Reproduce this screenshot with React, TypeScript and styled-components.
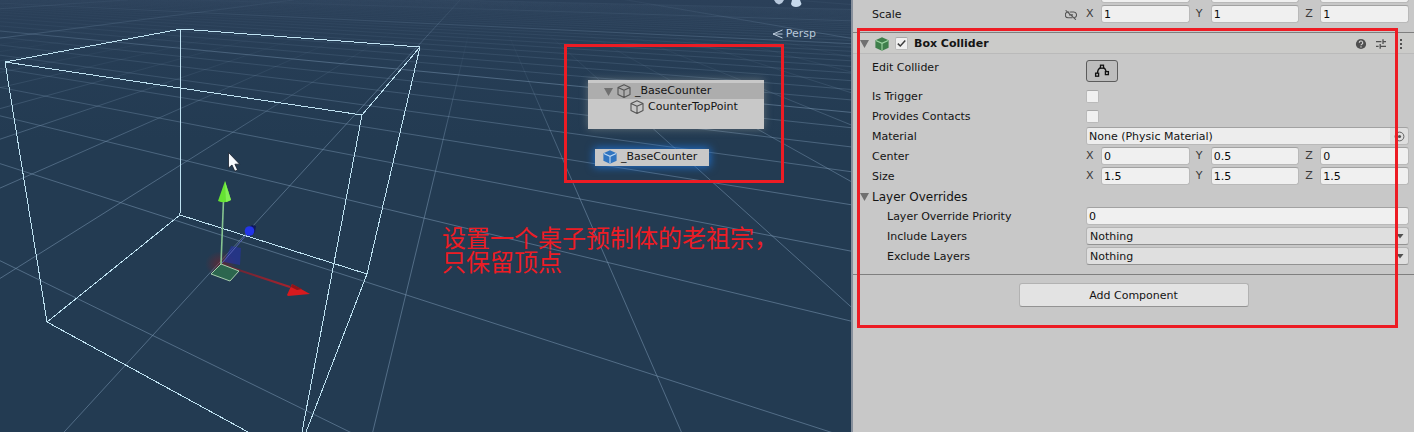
import React from "react";
import styled, { createGlobalStyle } from "styled-components";

const GlobalStyle = createGlobalStyle`
  *, *::before, *::after { box-sizing: border-box; }
  body {
    margin: 0;
    background: #c8c8c8;
    color: #141414;
    font-family: "DejaVu Sans", Verdana, sans-serif;
    font-size: 11px;
    line-height: 16px;
  }
  button, input, select { font: inherit; color: inherit; margin: 0; }
`;

/* ---------- shell ---------- */

const Editor = styled.main`
  position: relative;
  display: grid;
  grid-template-columns: minmax(0, 851fr) minmax(0, 563fr);
  min-height: 100vh;
  overflow: hidden;
`;

const Scene = styled.section`
  position: relative;
  overflow: hidden;
  background: linear-gradient(#2b4059 0, #263d55 60px, #233b52 140px);
`;

const SceneCanvas = styled.svg`
  position: absolute;
  inset: 0;
  width: 100%;
  height: 100%;
`;

const Inspector = styled.section`
  border-left: 2px solid #87909c;
  background: #c8c8c8;
  overflow: hidden;
`;

/* ---------- scene overlays ---------- */

const Projection = styled.button`
  position: absolute;
  top: 26px;
  right: 35px;
  display: flex;
  align-items: center;
  gap: 3px;
  padding: 0;
  border: 0;
  background: none;
  color: #b9c9da;
`;

const Callout = styled.div<{ $x: number; $y: number; $w: number; $h: number }>`
  position: absolute;
  left: ${(p) => p.$x}px;
  top: ${(p) => p.$y}px;
  width: ${(p) => p.$w}px;
  height: ${(p) => p.$h}px;
  border: 3px solid #ed1c24;
  pointer-events: none;
`;

const Note = styled.p`
  position: absolute;
  left: 442px;
  top: 225px;
  margin: 0;
  color: #ed1c24;
  font-family: "Noto Sans CJK SC", sans-serif;
  font-size: 24px;
  line-height: 24px;
  white-space: nowrap;
`;

const Hierarchy = styled.ul`
  position: absolute;
  left: 588px;
  top: 80px;
  width: 176px;
  height: 49px;
  margin: 0;
  padding: 3px 0 0;
  list-style: none;
  background: #c8c8c8;
  box-shadow: 0 0 8px rgba(210, 205, 190, 0.35);
`;

const TreeItem = styled.li<{ $depth: number; $selected?: boolean }>`
  display: flex;
  align-items: center;
  gap: 4px;
  height: 16px;
  padding-left: ${(p) => 16 + p.$depth * 26}px;
  background: ${(p) => (p.$selected ? "#adadad" : "transparent")};
  white-space: nowrap;
`;

const PrefabTag = styled.div`
  position: absolute;
  left: 595px;
  top: 149px;
  display: flex;
  align-items: center;
  gap: 4px;
  width: 114px;
  padding: 0 0 1px 8px;
  background: #c8c8c8;
  box-shadow: 0 0 8px 1px rgba(30, 120, 225, 0.85);
  white-space: nowrap;
`;

/* ---------- inspector parts ---------- */

const Properties = styled.div<{ $clipped?: boolean }>`
  display: flex;
  flex-direction: column;
  margin-top: ${(p) => (p.$clipped ? "-15px" : "0")};
  padding-bottom: 7px;
`;

const Row = styled.div<{ $tall?: boolean }>`
  display: grid;
  grid-template-columns: 214px minmax(0, 1fr);
  align-items: start;
  height: ${(p) => (p.$tall ? 33 : 20)}px;
  padding: ${(p) => (p.$tall ? 4 : 0)}px 5px 0 19px;
`;

const Label = styled.label<{ $nested?: boolean }>`
  display: flex;
  align-items: center;
  justify-content: space-between;
  height: 20px;
  padding: 0 9px 0 ${(p) => (p.$nested ? 15 : 0)}px;
  white-space: nowrap;
`;

const Axes = styled.div`
  display: grid;
  grid-template-columns: repeat(3, minmax(0, 1fr));
  gap: 6px;
`;

const Axis = styled.label`
  display: grid;
  grid-template-columns: 15px minmax(0, 1fr);
  align-items: center;
  color: #3a3a3a;

  > input { grid-column: 2; }
`;

const Field = styled.input`
  width: 100%;
  height: 18px;
  padding: 1px 2px 0;
  border: 1px solid #b9b9b9;
  border-top-color: #a2a2a2;
  border-radius: 3px;
  background: #f0f0f0;
  color: #0c0c0c;
`;

const ObjectField = styled.div`
  display: grid;
  grid-template-columns: minmax(0, 1fr) 18px;
  height: 18px;
  border: 1px solid #b9b9b9;
  border-top-color: #a2a2a2;
  border-radius: 3px;
  background: #dedede;
  overflow: hidden;
`;

const ObjectName = styled.input`
  min-width: 0;
  height: 16px;
  padding: 1px 2px 0;
  border: 0;
  background: #ededed;
`;

const IconButton = styled.button`
  display: grid;
  place-items: center;
  padding: 0;
  border: 0;
  background: none;
  color: #505050;
`;

const SelectBox = styled.div`
  display: grid;
  align-items: center;

  > * { grid-area: 1 / 1; }
  > svg { justify-self: end; margin-right: 5px; pointer-events: none; }
`;

const Select = styled.select`
  appearance: none;
  width: 100%;
  height: 18px;
  padding: 1px 3px 0;
  border: 1px solid #b4b4b4;
  border-bottom-color: #929292;
  border-radius: 3px;
  background: #dfdfdf;
`;

const CheckBox = styled.span`
  display: grid;
  place-items: center;
  width: 13px;
  height: 13px;

  > * { grid-area: 1 / 1; }
  > svg { pointer-events: none; visibility: hidden; }
  > input:checked + svg { visibility: visible; }
`;

const CheckInput = styled.input`
  appearance: none;
  width: 13px;
  height: 13px;
  border: 1px solid #bababa;
  border-top-color: #a8a8a8;
  border-radius: 2px;
  background: #f0f0f0;
`;

const CheckCell = styled.div`
  padding-top: 3px;
`;

const EditButton = styled.button`
  display: grid;
  place-items: center;
  width: 32px;
  height: 22px;
  margin-top: 2px;
  padding: 0;
  border: 1px solid #5c5c5c;
  border-radius: 3px;
  background: #bdbdbd;
`;

const Header = styled.header`
  display: flex;
  align-items: center;
  gap: 6px;
  height: 22px;
  padding: 1px 7px 0;
  border-top: 1px solid #7f7f7f;
  border-bottom: 1px solid #bababa;
  background: #cbcbc9;
`;

const Title = styled.h2`
  flex: 1;
  margin: 0;
  font-size: 11px;
  font-weight: 700;
  line-height: 16px;
`;

const Tools = styled.div`
  display: flex;
  gap: 8px;
`;

const FoldoutRow = styled.button`
  display: flex;
  align-items: center;
  gap: 3px;
  height: 20px;
  padding: 0 0 1px 7px;
  border: 0;
  background: none;
  font-size: 12px;
`;

const Footer = styled.footer`
  display: flex;
  justify-content: center;
  padding: 8px 0;
  border-top: 1px solid #7f7f7f;
`;

const AddButton = styled.button`
  width: 230px;
  height: 24px;
  padding: 1px 0 0;
  border: 1px solid #b2b2b2;
  border-bottom-color: #939393;
  border-radius: 3px;
  background: #e3e3e3;
`;

/* ---------- icons ---------- */

const Triangle = () => (
  <svg width="9" height="9" viewBox="0 0 9 9" aria-hidden="true">
    <path d="M0 1h9L4.5 9z" fill="#707070" />
  </svg>
);

const CubeOutline = () => (
  <svg width="14" height="14" viewBox="0 0 14 14" fill="none" stroke="#555" strokeWidth="1.1" strokeLinejoin="round" aria-hidden="true">
    <path d="M7 .8 13 3.5v7L7 13.4 1 10.5v-7zM1 3.5l6 2.7 6-2.7M7 6.2v7.2" />
  </svg>
);

const CubeSolid = ({ fill, edge }: { fill: string; edge: string }) => (
  <svg width="14" height="14" viewBox="0 0 14 14" aria-hidden="true">
    <path d="M7 .3 13.6 3.3v7.4L7 13.8.4 10.7V3.3z" fill={fill} />
    <path d="M.8 3.6 7 6.3l6.2-2.7M7 6.3v7.3" fill="none" stroke={edge} strokeWidth="1.1" />
  </svg>
);

const Unlinked = () => (
  <svg width="12" height="10" viewBox="0 0 12 10" fill="none" stroke="#555" strokeWidth="1.1" strokeLinecap="round" aria-hidden="true">
    <path d="M4 2H3.2a2.8 2.8 0 0 0 0 5.8H7M5.500 2H8.800a2.8 2.8 0 0 1 1 5.400M4.500 4.900h3M1 .6l9.500 8.800" />
  </svg>
);

const EditPoints = () => (
  <svg width="16" height="14" viewBox="0 0 16 14" fill="none" stroke="#111" strokeWidth="1.3" aria-hidden="true">
    <path d="M3.4 9C3.6 6.500 4.6 4.500 6.400 3.600M9.600 3.600c1.4.9 2.200 2.200 2.600 4" />
    <rect x="1.6" y="9.2" width="3" height="3" />
    <rect x="6.5" y="1.2" width="3" height="3" />
    <rect x="11.4" y="7.6" width="3" height="3" />
  </svg>
);

const Help = () => (
  <svg width="12" height="12" viewBox="0 0 12 12" aria-hidden="true">
    <circle cx="6" cy="6" r="5.1" fill="#505050" />
    <path d="M4.3 4.8a1.7 1.7 0 1 1 2.5 1.4c-.6.3-.8.5-.8 1.1M6 8.2v1.2" fill="none" stroke="#d0d0d0" strokeWidth="1.2" />
  </svg>
);

const Presets = () => (
  <svg width="12" height="12" viewBox="0 0 12 12" fill="none" stroke="#505050" strokeWidth="1.3" aria-hidden="true">
    <path d="M1 3.6h5.4M8 3.6h3M8 1.2v4.8M1 8.4h2.6M5.2 8.4H11M5.2 6v4.8" />
  </svg>
);

const Kebab = () => (
  <svg width="12" height="12" viewBox="0 0 12 12" fill="#505050" aria-hidden="true">
    <path d="M5 1h2v2H5zM5 5h2v2H5zM5 9h2v2H5z" />
  </svg>
);

const Picker = () => (
  <svg width="11" height="11" viewBox="0 0 11 11" aria-hidden="true">
    <circle cx="5.5" cy="5.5" r="4.4" fill="none" stroke="#606060" />
    <circle cx="5.5" cy="5.5" r="1.6" fill="#505050" />
  </svg>
);

const Check = () => (
  <svg width="13" height="13" viewBox="0 0 13 13" aria-hidden="true">
    <path d="M2.8 6.6 5.3 9 10.3 3.6" fill="none" stroke="#3c3c3c" strokeWidth="1.5" />
  </svg>
);

const Arrow = () => (
  <svg width="8" height="5" viewBox="0 0 8 5" aria-hidden="true">
    <path d="M.5 0h7L4 4.5z" fill="#505050" />
  </svg>
);

const PerspGlyph = () => (
  <svg width="11" height="10" viewBox="0 0 11 10" fill="none" stroke="#b9c9da" aria-hidden="true">
    <path d="M10.5 1 1 5l9.5 4M1 5h9.5" />
  </svg>
);

/* ---------- ground grid in perspective ---------- */

type Point = [number, number];

/* Unit square to screen quad; four cells along s, two along t. */
const quad: Point[] = [[32, 174], [657, 376], [580, 199], [159, 118]];
const [[x0, y0], [x1, y1], [x2, y2], [x3, y3]] = quad;
const sx = x0 - x1 + x2 - x3;
const sy = y0 - y1 + y2 - y3;
const det = (x1 - x2) * (y3 - y2) - (x3 - x2) * (y1 - y2);
const g = (sx * (y3 - y2) - (x3 - x2) * sy) / det;
const h = ((x1 - x2) * sy - sx * (y1 - y2)) / det;

const project = (s: number, t: number): Point => {
  const w = 1 + g * s + h * t;
  return [
    ((x1 - x0 + g * x1) * s + (x3 - x0 + h * x3) * t + x0) / w,
    ((y1 - y0 + g * y1) * s + (y3 - y0 + h * y3) * t + y0) / w,
  ];
};

const range = (from: number, to: number) => Array.from({ length: to - from + 1 }, (_, k) => from + k);

const toPath = (a: Point, b: Point) =>
  `M${a[0].toFixed(1)} ${a[1].toFixed(1)}L${b[0].toFixed(1)} ${b[1].toFixed(1)}`;

const depthLine = (i: number) => {
  const s = i / 4;
  return toPath(project(s, -(1 + g * s) / h + 0.15), project(s, 90));
};

const crossLine = (j: number) => {
  const t = (j - 1) / 2;
  return toPath(project(-90, t), project(-(1 + h * t) / g - 0.15, t));
};

const isMajorDepth = (i: number) => (i + 8) % 10 === 0;
const isMajorCross = (j: number) => (j + 2) % 10 === 0;
const depth = range(-28, 52);
const cross = range(-4, 38);
const minorDepth = depth.filter((i) => !isMajorDepth(i)).map(depthLine).join("");
const minorCross = cross.filter((j) => !isMajorCross(j)).map(crossLine).join("");
const majorGrid = [
  ...depth.filter(isMajorDepth).map(depthLine),
  ...cross.filter(isMajorCross).map(crossLine),
].join("");

const SceneDrawing = () => (
  <SceneCanvas viewBox="0 0 851 432" preserveAspectRatio="xMinYMin slice" aria-hidden="true">
    <defs>
      <linearGradient id="minorDepth" gradientUnits="userSpaceOnUse" x1="0" y1="30" x2="0" y2="200">
        <stop offset="0" stopColor="#7d9ab6" stopOpacity="0" />
        <stop offset="0.25" stopColor="#7d9ab6" stopOpacity="0.12" />
        <stop offset="0.6" stopColor="#7d9ab6" stopOpacity="0.4" />
        <stop offset="1" stopColor="#7d9ab6" stopOpacity="0.52" />
      </linearGradient>
      <linearGradient id="minorCross" gradientUnits="userSpaceOnUse" x1="0" y1="15" x2="0" y2="215">
        <stop offset="0" stopColor="#7d9ab6" stopOpacity="0.04" />
        <stop offset="0.25" stopColor="#7d9ab6" stopOpacity="0.2" />
        <stop offset="0.6" stopColor="#7d9ab6" stopOpacity="0.42" />
        <stop offset="1" stopColor="#7d9ab6" stopOpacity="0.52" />
      </linearGradient>
      <linearGradient id="major" gradientUnits="userSpaceOnUse" x1="0" y1="0" x2="0" y2="160">
        <stop offset="0" stopColor="#7d9ab6" stopOpacity="0.06" />
        <stop offset="0.4" stopColor="#7d9ab6" stopOpacity="0.46" />
        <stop offset="1" stopColor="#7d9ab6" stopOpacity="0.52" />
      </linearGradient>
      <radialGradient id="redGlow">
        <stop offset="0" stopColor="#a01818" stopOpacity="0.45" />
        <stop offset="1" stopColor="#a01818" stopOpacity="0" />
      </radialGradient>
      <linearGradient id="shaft" x1="0" x2="1">
        <stop offset="0" stopColor="#5c2738" />
        <stop offset="1" stopColor="#a8222c" />
      </linearGradient>
    </defs>
    <path d={minorDepth} stroke="url(#minorDepth)" fill="none" />
    <path d={minorCross} stroke="url(#minorCross)" fill="none" />
    <path d={majorGrid} stroke="url(#major)" fill="none" />

    <path
      d="M5 62 181 29 420 47 362 115ZM181 29 180 215M5 62 47 322M362 115 302 432M420 47 367 274 306 432M180 215 367 274M180 215 47 322 248 432"
      fill="none"
      stroke="#bfe2f2"
      shapeRendering="crispEdges"
    />

    <ellipse cx="221" cy="264" rx="16" ry="13" fill="url(#redGlow)" />
    <path d="M224 262 231 246 241 248 240 265z" fill="#2632a8" opacity="0.6" />
    <path d="M222 263 248 233" stroke="#5663b4" />
    <path d="M246 229 252 225 256 226 255 232 250 236z" fill="#101a5c" />
    <circle cx="249.5" cy="231" r="4.8" fill="#2335e8" />
    <path d="M222 264.5 290 287" stroke="url(#shaft)" strokeWidth="2" />
    <path d="M287 295 292 284 310 294 288 296z" fill="#d81a1e" />
    <path d="M292 284 302 289 297 290 291 287z" fill="#8e1519" />
    <path d="M221 264 239 271 230 281 211 274z" fill="#2c664e" stroke="#a9cfae" />
    <path d="M221 264 223.5 200" stroke="#86c490" strokeWidth="1.6" />
    <path d="M225 181 231 200Q225 204 218 201z" fill="#66e333" />
    <path d="M225 181 231 200 226 202z" fill="#83f055" />

    <path d="M228.5 152.500v15.500l3.500-3 2.800 6.200 2.800-1.200-2.700-5.800h4.800z" fill="#f7fbff" stroke="#18202c" strokeWidth="0.8" />

    <path d="M774 0h10l-2 3-3 1.5-3-1.5z" fill="#b7c8dc" />
    <path d="M792 0h8l1.5 4Q800 7 796 7T791 4z" fill="#c6d9ec" />
  </SceneCanvas>
);

/* ---------- rows ---------- */

const Vector = ({ name, values, linkable }: { name: string; values: string[]; linkable?: boolean }) => (
  <Row>
    <Label as="span">
      {name}
      {linkable && <Unlinked />}
    </Label>
    <Axes role="group" aria-label={name}>
      {["X", "Y", "Z"].map((axis, k) => (
        <Axis key={axis}>
          {axis}
          <Field defaultValue={values[k]} />
        </Axis>
      ))}
    </Axes>
  </Row>
);

/* The row scrolled off the top, of which only the lower edge of the fields shows. */
const ScrolledRow = () => (
  <Row>
    <span />
    <Axes role="group" aria-label="Rotation">
      {["X", "Y", "Z"].map((axis) => (
        <Axis as="div" key={axis}>
          <Field aria-label={`Rotation ${axis}`} />
        </Axis>
      ))}
    </Axes>
  </Row>
);

const Toggle = ({ id, name }: { id: string; name: string }) => (
  <Row>
    <Label htmlFor={id}>{name}</Label>
    <CheckCell>
      <CheckBox>
        <CheckInput id={id} type="checkbox" />
        <Check />
      </CheckBox>
    </CheckCell>
  </Row>
);

const LayerMask = ({ id, name }: { id: string; name: string }) => (
  <Row>
    <Label $nested htmlFor={id}>{name}</Label>
    <SelectBox>
      <Select id={id} defaultValue="Nothing">
        <option>Nothing</option>
      </Select>
      <Arrow />
    </SelectBox>
  </Row>
);

export default function App() {
  return (
    <>
      <GlobalStyle />
      <Editor>
        <Scene>
          <SceneDrawing />
          <Projection type="button">
            <PerspGlyph />
            Persp
          </Projection>
          <Hierarchy>
            <TreeItem $depth={0} $selected>
              <Triangle />
              <CubeOutline />
              _BaseCounter
            </TreeItem>
            <TreeItem $depth={1}>
              <CubeOutline />
              CounterTopPoint
            </TreeItem>
          </Hierarchy>
          <PrefabTag>
            <CubeSolid fill="#2f74c0" edge="#bcd8f2" />
            _BaseCounter
          </PrefabTag>
          <Callout $x={564} $y={44} $w={220} $h={139} />
          <Note>
            设置一个桌子预制体的老祖宗，
            <br />
            只保留顶点
          </Note>
        </Scene>

        <Inspector>
          <Properties $clipped>
            <ScrolledRow />
            <Vector name="Scale" values={["1", "1", "1"]} linkable />
          </Properties>

          <Header>
            <Triangle />
            <CubeSolid fill="#3f7f4b" edge="#9fd6a4" />
            <CheckBox>
              <CheckInput type="checkbox" defaultChecked aria-label="Box Collider enabled" />
              <Check />
            </CheckBox>
            <Title>Box Collider</Title>
            <Tools>
              <IconButton type="button" aria-label="Help"><Help /></IconButton>
              <IconButton type="button" aria-label="Presets"><Presets /></IconButton>
              <IconButton type="button" aria-label="More"><Kebab /></IconButton>
            </Tools>
          </Header>

          <Properties>
            <Row $tall>
              <Label htmlFor="edit">Edit Collider</Label>
              <EditButton id="edit" type="button"><EditPoints /></EditButton>
            </Row>
            <Toggle id="trigger" name="Is Trigger" />
            <Toggle id="contacts" name="Provides Contacts" />
            <Row>
              <Label htmlFor="material">Material</Label>
              <ObjectField>
                <ObjectName id="material" readOnly value="None (Physic Material)" />
                <IconButton type="button" aria-label="Pick material"><Picker /></IconButton>
              </ObjectField>
            </Row>
            <Vector name="Center" values={["0", "0.5", "0"]} />
            <Vector name="Size" values={["1.5", "1.5", "1.5"]} />
            <FoldoutRow type="button" aria-expanded="true">
              <Triangle />
              Layer Overrides
            </FoldoutRow>
            <Row>
              <Label $nested htmlFor="priority">Layer Override Priority</Label>
              <Field id="priority" defaultValue="0" />
            </Row>
            <LayerMask id="include" name="Include Layers" />
            <LayerMask id="exclude" name="Exclude Layers" />
          </Properties>

          <Footer>
            <AddButton type="button">Add Component</AddButton>
          </Footer>
        </Inspector>
        <Callout $x={857} $y={28} $w={541} $h={300} />
      </Editor>
    </>
  );
}
